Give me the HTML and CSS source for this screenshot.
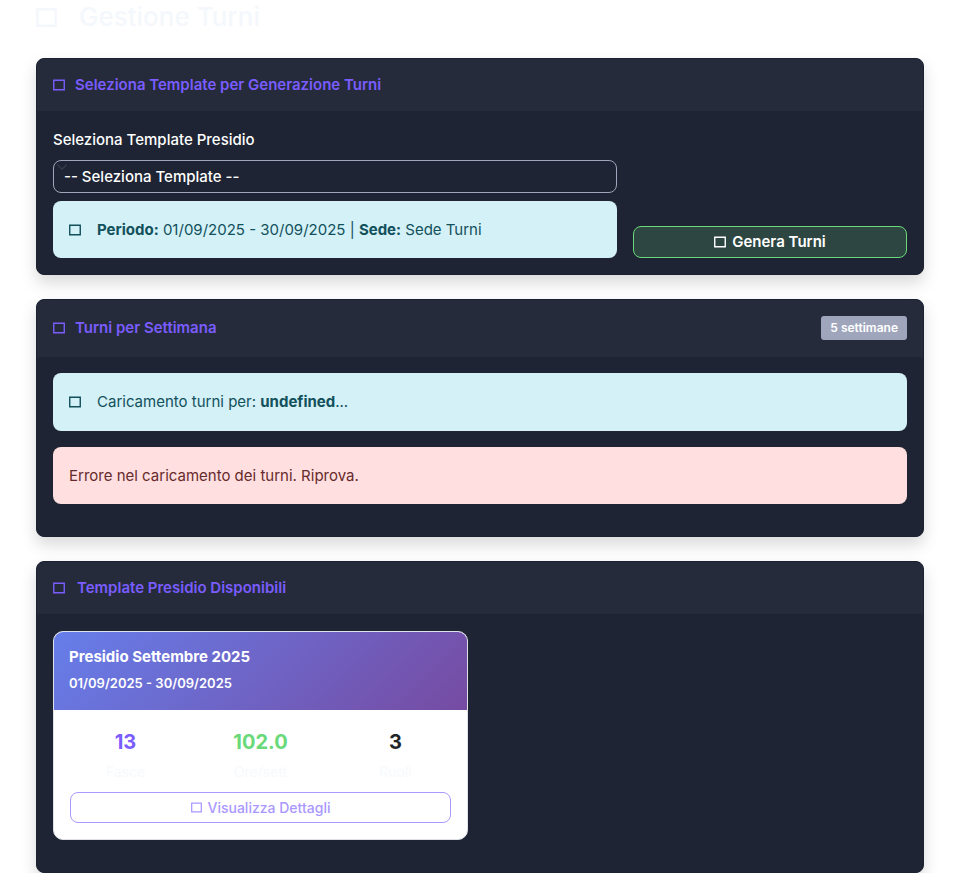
FILE: index.html
```html
<!DOCTYPE html>
<html lang="it">
<head>
<meta charset="utf-8">
<meta name="viewport" content="width=device-width, initial-scale=1">
<title>Gestione Turni</title>
<link rel="stylesheet" href="styles.css">
</head>
<body>
<svg class="sprite" aria-hidden="true">
  <symbol id="box" viewBox="0 0 12 12"><path d="M.75 1.25h10.5v9.5H.75z" fill="none" stroke="currentColor" stroke-width="1.4"/></symbol>
</svg>
<main class="page">
  <h1 class="page-title"><svg class="icon icon-lg" aria-hidden="true"><use href="#box"/></svg>Gestione Turni</h1>

  <section class="card">
    <header class="card-header">
      <h2 class="card-title"><svg class="icon" aria-hidden="true"><use href="#box"/></svg>Seleziona Template per Generazione Turni</h2>
    </header>
    <form class="card-body generator">
      <div class="field">
        <label class="label" for="template">Seleziona Template Presidio</label>
        <select class="select" id="template">
          <option>-- Seleziona Template --</option>
          <option>Presidio Settembre 2025</option>
        </select>
        <div class="alert info compact"><svg class="icon" aria-hidden="true"><use href="#box"/></svg><p><strong>Periodo:</strong> 01/09/2025 - 30/09/2025 | <strong>Sede:</strong> Sede Turni</p></div>
      </div>
      <button class="btn btn-success" type="button"><svg class="icon" aria-hidden="true"><use href="#box"/></svg>Genera Turni</button>
    </form>
  </section>

  <section class="card">
    <header class="card-header roomy">
      <h2 class="card-title"><svg class="icon" aria-hidden="true"><use href="#box"/></svg>Turni per Settimana</h2>
      <span class="badge">5 settimane</span>
    </header>
    <div class="card-body">
      <div class="alert info"><svg class="icon" aria-hidden="true"><use href="#box"/></svg><p>Caricamento turni per: <strong>undefined</strong>...</p></div>
      <div class="alert danger"><p>Errore nel caricamento dei turni. Riprova.</p></div>
    </div>
  </section>

  <section class="card">
    <header class="card-header">
      <h2 class="card-title wide"><svg class="icon" aria-hidden="true"><use href="#box"/></svg>Template Presidio Disponibili</h2>
    </header>
    <div class="card-body templates">
      <article class="template">
        <header class="template-header">
          <h3 class="template-name">Presidio Settembre 2025</h3>
          <p class="template-dates">01/09/2025 - 30/09/2025</p>
        </header>
        <div class="template-body">
          <dl class="stats">
            <div class="stat"><dd class="value purple">13</dd><dt class="caption">Fasce</dt></div>
            <div class="stat"><dd class="value green">102.0</dd><dt class="caption">Ore/sett</dt></div>
            <div class="stat"><dd class="value">3</dd><dt class="caption">Ruoli</dt></div>
          </dl>
          <button class="btn btn-outline" type="button"><svg class="icon icon-sm" aria-hidden="true"><use href="#box"/></svg>Visualizza Dettagli</button>
        </div>
      </article>
    </div>
  </section>
</main>
</body>
</html>
```
FILE: styles.css
```css
* { box-sizing: border-box; }
body {
  margin: 0;
  background: #fff;
  color: #212529;
  font: 15px/24px Inter, "Liberation Sans", sans-serif;
}
h1, h2, h3, p, dl, dd { margin: 0; }
.sprite { position: absolute; width: 0; height: 0; }
.page { padding: 0 36px; }

.icon { width: 12px; height: 12px; flex: none; }
.icon-lg { width: 21px; height: 21px; }
.icon-sm { width: 11px; height: 11px; }

.page-title {
  display: flex;
  align-items: center;
  gap: 22px;
  height: 34px;
  margin-bottom: 24px;
  color: #f4f8fc;
  font-size: 26px;
  font-weight: 500;
}

.card {
  margin-bottom: 24px;
  border: 1px solid #1b2130;
  border-radius: 8px;
  background: #1e2433;
  box-shadow: 0 8px 16px rgba(0, 0, 0, .15);
}
.card-header {
  display: flex;
  align-items: center;
  justify-content: space-between;
  padding: 14px 16px;
  border-radius: 7px 7px 0 0;
  background: #252b3b;
}
.card-header.roomy { padding: 16px 16px 17px; }
.card-title {
  display: flex;
  align-items: center;
  gap: 10px;
  color: #7a5cff;
  font-size: 15px;
  font-weight: 600;
}
.card-title.wide { gap: 12px; }
.card-body { padding: 16px; }
.badge {
  padding: 0 9px;
  border-radius: 3px;
  background: #9fa6bc;
  color: #fff;
  font-size: 12px;
  font-weight: 600;
}

.generator {
  display: grid;
  grid-template-columns: 564fr 274fr;
  gap: 16px;
  align-items: end;
}
.label { display: block; padding-top: 1px; margin-bottom: 8px; color: #fff; font-weight: 500; }
.select {
  display: block;
  width: 100%;
  height: 33px;
  margin-bottom: 8px;
  padding: 1px 10px 0;
  border: 1px solid #9fa6bc;
  border-radius: 8px;
  appearance: none;
  background: transparent url("data:image/svg+xml,%3Csvg xmlns='http://www.w3.org/2000/svg' viewBox='0 0 16 16'%3E%3Cpath fill='none' stroke='%23343a4b' stroke-linecap='round' stroke-linejoin='round' stroke-width='2' d='m2 5 6 6 6-6'/%3E%3C/svg%3E") 2px 0 / 12px 12px no-repeat;
  color: #fff;
  font: inherit;
  font-weight: 500;
}

.alert {
  display: flex;
  align-items: center;
  gap: 16px;
  margin-bottom: 16px;
  padding: 17px 16px 16px;
  border-radius: 8px;
}
.info { padding-bottom: 17px; background: #d3f1f7; color: #12505b; }
.compact { margin-bottom: 0; padding-bottom: 16px; }
.danger { background: #ffdfdf; color: #672a2c; }

.btn {
  display: flex;
  align-items: center;
  justify-content: center;
  width: 100%;
  border: 1px solid;
  border-radius: 8px;
  font: inherit;
  font-weight: 500;
}
.btn-success {
  height: 32px;
  gap: 6px;
  border-color: #69d97a;
  background: #2d4641;
  color: #fff;
  font-weight: 600;
}
.btn-outline {
  height: 31px;
  gap: 6px;
  border-color: #a998ff;
  background: transparent;
  color: #a998ff;
  font-size: 14px;
}

.templates {
  display: grid;
  grid-template-columns: repeat(2, 1fr);
  gap: 24px;
  padding: 17px 16px 32px;
}
.template {
  overflow: hidden;
  border: 1px solid #dee2e6;
  border-radius: 10px;
  background: #fff;
}
.template-header {
  padding: 13px 15px 15px;
  background: linear-gradient(135deg, #667eea, #764ba2);
  color: #fff;
}
.template-name { margin-bottom: 2px; font-size: 15px; font-weight: 700; }
.template-dates { font-size: 13px; font-weight: 600; }
.template-body { padding: 16px; }
.stats { display: grid; grid-template-columns: repeat(3, 1fr); gap: 24px; margin-bottom: 8px; text-align: center; }
.stat { display: flex; flex-direction: column; gap: 2px; }
.value { font-size: 20px; line-height: 32px; font-weight: 700; }
.caption { color: #f7fafd; font-size: 14px; }
.purple { color: #7a5cff; }
.green { color: #69d97a; }
```
